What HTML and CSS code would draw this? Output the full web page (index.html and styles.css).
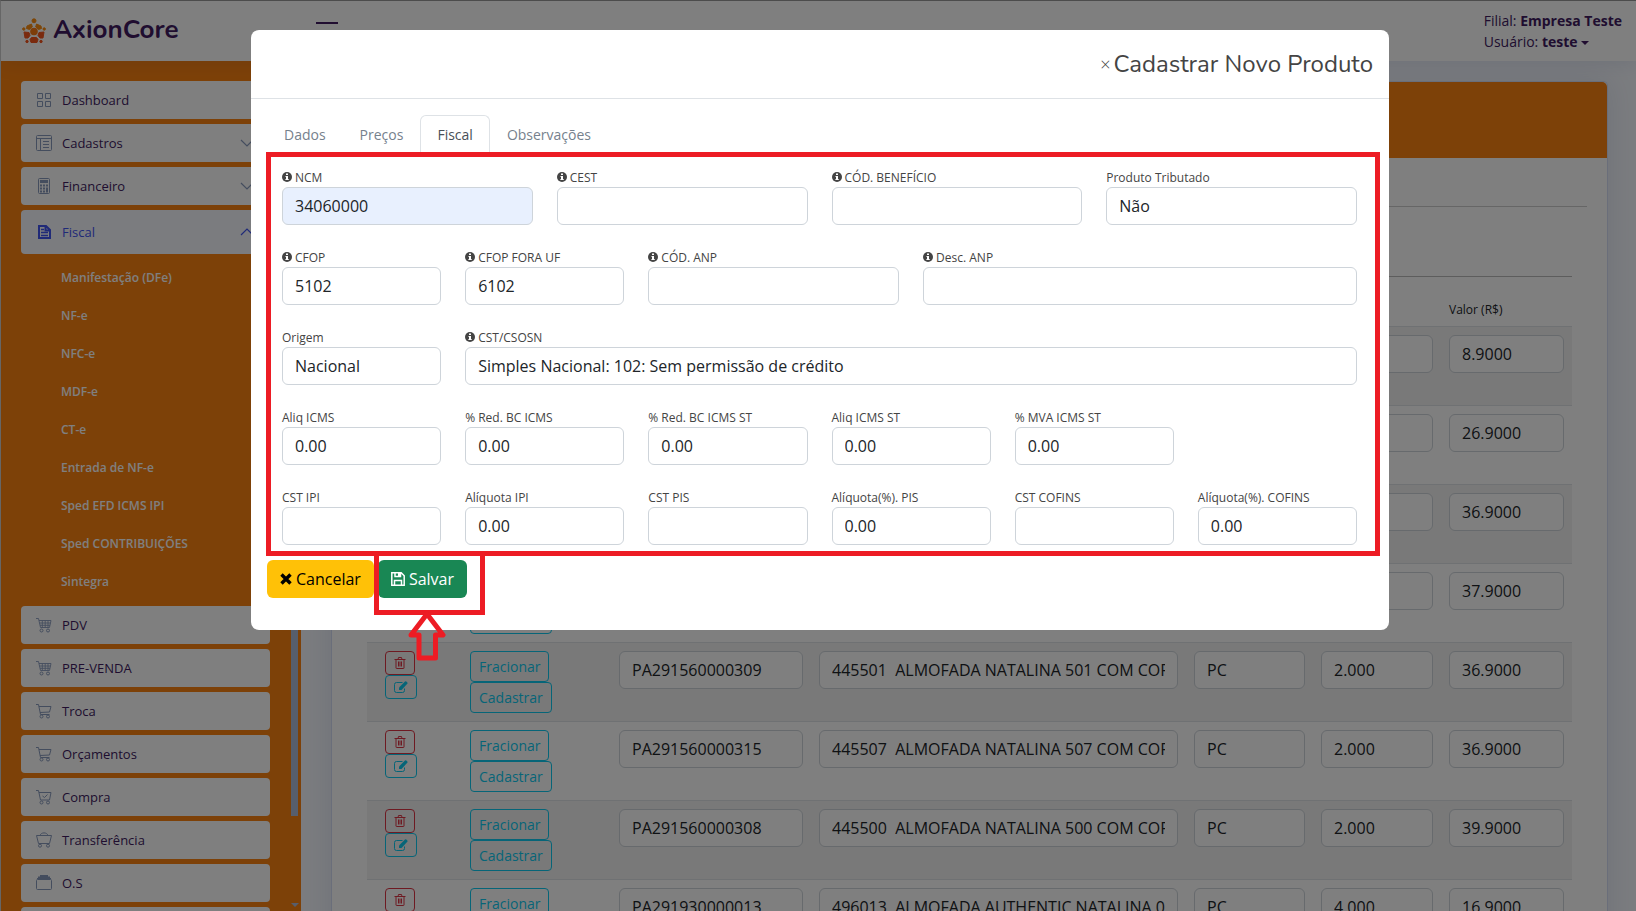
FILE: index.html
```html
<!DOCTYPE html>
<html lang="pt-br">
<head>
    <meta charset="UTF-8">
    <meta name="viewport" content="width=device-width, initial-scale=1.0">
    <title>AxionCore</title>
    <link rel="stylesheet" href="styles.css">
</head>
<body>

<svg class="sprite" aria-hidden="true">
    <symbol id="i-grid" viewBox="0 0 16 16"><path fill="none" stroke="currentColor" d="M1.5 1.5h5v5h-5zM9.500 1.500h5v5h-5zM1.500 9.500h5v5h-5zM9.500 9.500h5v5h-5z"/></symbol>
    <symbol id="i-list" viewBox="0 0 16 16"><path fill="none" stroke="currentColor" d="M.5 1.500a1 1 0 0 1 1-1h13a1 1 0 0 1 1 1v13a1 1 0 0 1-1 1h-13a1 1 0 0 1-1-1zM.5 3.500h15M4.500 3.500v12M7 6.500h6M7 9.500h6M7 12.500h6"/></symbol>
    <symbol id="i-calc" viewBox="0 0 16 16"><path fill="none" stroke="currentColor" d="M2.500 1.500a1 1 0 0 1 1-1h9a1 1 0 0 1 1 1v13a1 1 0 0 1-1 1h-9a1 1 0 0 1-1-1z"/><path fill="currentColor" d="M4 2h8v3H4zM4 6.500h2v2H4zM7 6.500h2v2H7zM10 6.500h2v2h-2zM4 9.500h2v2H4zM7 9.500h2v2H7zM10 9.500h2v5h-2zM4 12.500h2v2H4zM7 12.500h2v2H7z"/></symbol>
    <symbol id="i-doc" viewBox="0 0 16 16"><path fill="none" stroke="currentColor" stroke-width="2" d="M3 2h7l4 4v8H3zM9.500 2v4.500H14"/><path stroke="currentColor" stroke-width="1.500" d="M5 5.500h3M5 8.500h7M5 11.500h7"/></symbol>
    <symbol id="i-cart4" viewBox="0 0 16 16"><path fill="none" stroke="currentColor" stroke-width=".9" d="M0 1.500h2.500l2 9h9l1.500-7H3M3.500 6h11M4 8.300h10M6.300 3.500v7M9.200 3.500v7M12 3.500v7"/><circle cx="5.500" cy="13.500" r="1.500" fill="none" stroke="currentColor"/><circle cx="12" cy="13.500" r="1.500" fill="none" stroke="currentColor"/></symbol>
    <symbol id="i-cart2" viewBox="0 0 16 16"><path fill="none" stroke="currentColor" d="M0 1.500h2.500l2 10h9M3 3.500h12l-1.500 5.500-9.500.5"/><circle cx="5.500" cy="13.500" r="1.500" fill="none" stroke="currentColor"/><circle cx="12" cy="13.500" r="1.500" fill="none" stroke="currentColor"/></symbol>
    <symbol id="i-cartcheck" viewBox="0 0 16 16"><path fill="none" stroke="currentColor" d="M0 1.500h2.500l2 9.500h9L15 3.500H3M6.500 7l2 1.500 3-3"/><circle cx="5.500" cy="13.500" r="1.500" fill="none" stroke="currentColor"/><circle cx="12" cy="13.500" r="1.500" fill="none" stroke="currentColor"/></symbol>
    <symbol id="i-basket" viewBox="0 0 16 16"><path fill="none" stroke="currentColor" d="M.5 3.500h15L13.500 11.500h-11zM4 3.500C5 0 11 0 12 3.500"/><circle cx="4" cy="13.700" r="1.500" fill="none" stroke="currentColor"/><circle cx="12" cy="13.700" r="1.500" fill="none" stroke="currentColor"/></symbol>
    <symbol id="i-collection" viewBox="0 0 16 16"><path fill="none" stroke="currentColor" d="M.5 5.500a1 1 0 0 1 1-1h13a1 1 0 0 1 1 1v8a1 1 0 0 1-1 1h-13a1 1 0 0 1-1-1z"/><path fill="currentColor" d="M4 0h8v1.500h2V3h1v1H1V3h1V1.500h2z"/></symbol>
    <symbol id="i-down" viewBox="0 0 16 16"><path fill="none" stroke="currentColor" stroke-width="1.200" d="M2 5l6 6 6-6"/></symbol>
    <symbol id="i-up" viewBox="0 0 16 16"><path fill="none" stroke="currentColor" stroke-width="1.200" d="M2 11l6-6 6 6"/></symbol>
    <symbol id="i-info" viewBox="0 0 10 10"><circle cx="5" cy="5" r="5" fill="currentColor"/><path fill="#fff" d="M4 1.500h2v1.500H4zM3.500 4H6v3h.7v1H3.400V7H4V5h-.5z"/></symbol>
    <symbol id="i-trash" viewBox="0 0 12 12"><path fill="none" stroke="currentColor" d="M.5 2.500h11M4 2.500l.5-2h3l.5 2M2 2.500v8.500a.5.5 0 0 0 .5.500h7a.5.5 0 0 0 .5-.5V2.500M4.500 4.500v5M6 4.500v5M7.500 4.500v5"/></symbol>
    <symbol id="i-edit" viewBox="0 0 14 12"><path fill="none" stroke="currentColor" d="M8.500 1.500h-6a2 2 0 0 0-2 2v6a2 2 0 0 0 2 2h6a2 2 0 0 0 2-2V7.500"/><path fill="currentColor" d="M5 9V6.500L11 .5a1 1 0 0 1 1.300 0l1 1a1 1 0 0 1 0 1.300L7.500 9z"/></symbol>
    <symbol id="i-x" viewBox="0 0 12 12"><path fill="none" stroke="currentColor" stroke-width="3.400" d="M1.500 1.500l9 9M10.500 1.500l-9 9"/></symbol>
    <symbol id="i-save" viewBox="0 0 14 14"><path fill="none" stroke="currentColor" stroke-width="1.500" d="M.8.8h9.400l3 3v9.400H.8zM3.500 13V8.500h7V13M4 1v3.500h5.500V1"/><path fill="currentColor" d="M7 1h2v3H7z"/></symbol>
</svg>

<header class="header">
    <a class="logo" href="#">
        <svg width="24" height="26" viewBox="0 0 24 26">
            <g fill="#fb8c10" stroke="#fb8c10" stroke-linejoin="round">
                <circle cx="12" cy="2.800" r="2"/><circle cx="1.800" cy="11" r="1.200"/><circle cx="22.200" cy="11" r="1.200"/>
                <path d="M9.500 6l.8 3-2.800 2.500-3-1L5 8zM14.500 6l-.8 3 2.800 2.500 3-1L19 8z"/>
            </g>
            <g fill="#f4551c" stroke="#f4551c" stroke-linejoin="round">
                <circle cx="5" cy="23.500" r="1.200"/><circle cx="19" cy="23.500" r="1.200"/>
                <path d="M2 14l5 .5 1 3-2 2.500H3zM22 14l-5 .5-1 3 2 2.500h3zM9.500 19.500h5l1.500 2-1 3H9l-1-3z"/>
            </g>
            <circle cx="12" cy="13.500" r="3.800" fill="#fb7a14"/>
        </svg>
        <span>AxionCore</span>
    </a>
    <button class="toggle" aria-label="Menu"></button>
    <div class="user">
        <div>Filial: <b>Empresa Teste</b></div>
        <div>Usuário: <b>teste</b> <i class="caret"></i></div>
    </div>
</header>

<div class="page">
    <aside class="sidebar">
        <nav class="menu">
            <a href="#" class="item"><svg><use href="#i-grid"/></svg>Dashboard</a>
            <a href="#" class="item"><svg><use href="#i-list"/></svg>Cadastros<svg class="arrow"><use href="#i-down"/></svg></a>
            <a href="#" class="item"><svg><use href="#i-calc"/></svg>Financeiro<svg class="arrow"><use href="#i-down"/></svg></a>
            <a href="#" class="item active"><svg><use href="#i-doc"/></svg>Fiscal<svg class="arrow"><use href="#i-up"/></svg></a>
            <div class="submenu">
                <a href="#">Manifestação (DFe)</a>
                <a href="#">NF-e</a>
                <a href="#">NFC-e</a>
                <a href="#">MDF-e</a>
                <a href="#">CT-e</a>
                <a href="#">Entrada de NF-e</a>
                <a href="#">Sped EFD ICMS IPI</a>
                <a href="#">Sped CONTRIBUIÇÕES</a>
                <a href="#">Sintegra</a>
            </div>
            <a href="#" class="item"><svg><use href="#i-cart4"/></svg>PDV</a>
            <a href="#" class="item"><svg><use href="#i-cart4"/></svg>PRE-VENDA</a>
            <a href="#" class="item"><svg><use href="#i-cart2"/></svg>Troca</a>
            <a href="#" class="item"><svg><use href="#i-cart2"/></svg>Orçamentos</a>
            <a href="#" class="item"><svg><use href="#i-cartcheck"/></svg>Compra</a>
            <a href="#" class="item"><svg><use href="#i-basket"/></svg>Transferência</a>
            <a href="#" class="item"><svg><use href="#i-collection"/></svg>O.S</a>
            <a href="#" class="item"></a>
        </nav>
        <div class="scrollbar"><div class="thumb"></div><i class="caret"></i></div>
    </aside>

    <main class="main">
        <section class="card">
            <div class="card-top"></div>
            <div class="card-line"></div>
            <div class="table-box">
                <table>
                    <colgroup>
                        <col class="c-acao"><col class="c-opcao"><col class="c-cod"><col>
                        <col class="c-un"><col class="c-qtd"><col class="c-valor">
                    </colgroup>
                    <thead>
                        <tr><th></th><th></th><th></th><th></th><th></th><th></th><th>Valor (R$)</th></tr>
                    </thead>
                    <tbody id="itens"></tbody>
                </table>
            </div>
        </section>
    </main>
</div>

<div class="backdrop">
    <div class="modal" role="dialog" aria-labelledby="titulo">
        <div class="modal-header">
            <button class="close" aria-label="Fechar">×</button>
            <h5 id="titulo">Cadastrar Novo Produto</h5>
        </div>
        <form class="modal-body">
            <div class="tabs">
                <button type="button">Dados</button>
                <button type="button">Preços</button>
                <button type="button" class="active">Fiscal</button>
                <button type="button">Observações</button>
            </div>
            <div class="pane">
                <div class="field s3"><label for="ncm"><svg><use href="#i-info"/></svg>NCM</label><input id="ncm" class="filled" value="34060000"></div>
                <div class="field s3"><label for="cest"><svg><use href="#i-info"/></svg>CEST</label><input id="cest"></div>
                <div class="field s3"><label for="benef"><svg><use href="#i-info"/></svg>CÓD. BENEFÍCIO</label><input id="benef"></div>
                <div class="field s3"><label for="trib">Produto Tributado</label><select id="trib"><option>Não</option></select></div>

                <div class="field s2"><label for="cfop"><svg><use href="#i-info"/></svg>CFOP</label><input id="cfop" value="5102"></div>
                <div class="field s2"><label for="cfopf"><svg><use href="#i-info"/></svg>CFOP FORA UF</label><input id="cfopf" value="6102"></div>
                <div class="field s3"><label for="anp"><svg><use href="#i-info"/></svg>CÓD. ANP</label><input id="anp"></div>
                <div class="field s5"><label for="danp"><svg><use href="#i-info"/></svg>Desc. ANP</label><input id="danp"></div>

                <div class="field s2"><label for="origem">Origem</label><select id="origem"><option>Nacional</option></select></div>
                <div class="field s10"><label for="cst"><svg><use href="#i-info"/></svg>CST/CSOSN</label><select id="cst"><option>Simples Nacional: 102: Sem permissão de crédito</option></select></div>

                <div class="field s2"><label for="icms">Aliq ICMS</label><input id="icms" value="0.00"></div>
                <div class="field s2"><label for="red">% Red. BC ICMS</label><input id="red" value="0.00"></div>
                <div class="field s2"><label for="redst">% Red. BC ICMS ST</label><input id="redst" value="0.00"></div>
                <div class="field s2"><label for="icmsst">Aliq ICMS ST</label><input id="icmsst" value="0.00"></div>
                <div class="field s2"><label for="mva">% MVA ICMS ST</label><input id="mva" value="0.00"></div>

                <div class="field s2 first"><label for="cstipi">CST IPI</label><input id="cstipi"></div>
                <div class="field s2"><label for="ipi">Alíquota IPI</label><input id="ipi" value="0.00"></div>
                <div class="field s2"><label for="cstpis">CST PIS</label><input id="cstpis"></div>
                <div class="field s2"><label for="pis">Alíquota(%). PIS</label><input id="pis" value="0.00"></div>
                <div class="field s2"><label for="cstcof">CST COFINS</label><input id="cstcof"></div>
                <div class="field s2"><label for="cof">Alíquota(%). COFINS</label><input id="cof" value="0.00"></div>
            </div>
            <div class="actions">
                <button type="button" class="btn cancel"><svg width="12" height="12"><use href="#i-x"/></svg>Cancelar</button>
                <div class="marked">
                    <button type="button" class="btn save"><svg width="14" height="14"><use href="#i-save"/></svg>Salvar</button>
                    <div class="mark"></div>
                    <svg class="mark-arrow" width="40" height="50" viewBox="0 0 40 50"><path fill="none" stroke="#ed1c24" stroke-width="5" stroke-linejoin="round" d="M20 2L36 23H28.500V46H12V23H4z"/></svg>
                </div>
            </div>
        </form>
    </div>
</div>

<script>
    var itens = [
        ["", "", "", "", "8.9000"],
        ["", "", "", "", "26.9000"],
        ["", "", "", "", "36.9000"],
        ["", "", "", "", "37.9000"],
        ["PA291560000309", "445501  ALMOFADA NATALINA 501 COM CORDAO", "PC", "2.000", "36.9000"],
        ["PA291560000315", "445507  ALMOFADA NATALINA 507 COM CORDAO", "PC", "2.000", "36.9000"],
        ["PA291560000308", "445500  ALMOFADA NATALINA 500 COM CORDAO", "PC", "2.000", "39.9000"],
        ["PA291930000013", "496013  ALMOFADA AUTHENTIC NATALINA 013", "PC", "4.000", "16.9000"]
    ];
    var nomes = ["Código", "Descrição", "Unidade", "Quantidade", "Valor"];
    var html = "";
    for (let i = 0; i < itens.length; i++) {
        html += `<tr><td><div class="stack">
            <button class="mini del" aria-label="Excluir"><svg width="12" height="12"><use href="#i-trash"/></svg></button>
            <button class="mini edit" aria-label="Editar"><svg width="14" height="12"><use href="#i-edit"/></svg></button>
            </div></td><td><div class="stack">
            <button class="small">Fracionar</button><button class="small">Cadastrar</button></div></td>`;
        for (let j = 0; j < 5; j++) {
            html += `<td><input aria-label="${nomes[j]}" value="${itens[i][j]}"></td>`;
        }
        html += "</tr>";
    }
    document.getElementById("itens").innerHTML = html;
</script>
</body>
</html>
```
FILE: styles.css
```css
* {
    box-sizing: border-box;
}

body {
    margin: 0;
    height: 100vh;
    overflow: hidden;
    display: flex;
    flex-direction: column;
    border-top: 1px solid #999;
    border-left: 1px solid #ccc;
    background: #f6f9ff;
    color: #444;
    font-family: "Open Sans", sans-serif;
    font-size: 16px;
}

a {
    text-decoration: none;
}

button, input, select {
    font-family: inherit;
}

.sprite {
    display: none;
}

/* header */
.header {
    display: flex;
    flex: none;
    align-items: center;
    height: 60px;
    padding: 0 14px 0 21px;
    background: #fff;
    box-shadow: 0 2px 20px rgba(1, 41, 112, 0.1);
    color: #401a60;
    z-index: 1;
}

.logo {
    display: flex;
    align-items: center;
    gap: 7px;
    width: 294px;
    color: #401a60;
    font-family: Nunito, Lato, sans-serif;
    font-size: 26px;
    font-weight: 700;
    line-height: 30px;
}

.logo span {
    padding-bottom: 2px;
}

.toggle {
    width: 22px;
    height: 2px;
    margin-bottom: 16px;
    padding: 0;
    border: 0;
    background: #401a60;
}

.user {
    margin-left: auto;
    font-size: 14px;
    line-height: 21px;
}

.caret {
    display: inline-block;
    border: 4px solid transparent;
    border-top-color: currentColor;
    border-bottom: 0;
    vertical-align: middle;
}

/* sidebar */
.page {
    display: flex;
    flex: 1;
    min-height: 0;
    overflow: hidden;
}

.sidebar {
    display: flex;
    flex: none;
    width: 300px;
    padding-left: 20px;
    background: #fa8210;
    overflow: hidden;
}

.menu {
    display: flex;
    flex-direction: column;
    flex: 1;
    gap: 5px;
    padding-top: 20px;
}

.item {
    display: flex;
    flex: none;
    align-items: center;
    height: 38px;
    padding: 0 15px 1px;
    border-radius: 4px;
    background: #fff;
    color: #401a60;
    font-size: 13px;
    font-weight: 500;
}

.item svg {
    width: 16px;
    height: 16px;
    margin-right: 10px;
    color: #899bbd;
}

.item .arrow {
    margin: 0 0 0 auto;
}

.item.active {
    height: 44px;
    background: #f6f9ff;
    color: #4154f1;
}

.item.active svg {
    color: #4154f1;
}

.submenu a {
    display: block;
    height: 38px;
    padding-left: 40px;
    color: #fff;
    font-size: 12px;
    font-weight: 600;
    line-height: 38px;
}

.scrollbar {
    display: flex;
    flex-direction: column;
    justify-content: space-between;
    align-items: center;
    width: 11px;
    margin-left: 20px;
    padding: 20px 2px 4px 0;
    color: #aebdd8;
}

.thumb {
    width: 7px;
    height: 89%;
    background: #aebdd8;
}

/* content */
.main {
    flex: 1;
    min-width: 0;
    padding: 20px 28px 0 30px;
}

.card {
    border: 1px solid #d5dcf5;
    border-bottom: 0;
    border-radius: 5px;
    background: #fff;
    box-shadow: 0 0 30px rgba(1, 41, 112, 0.1);
}

.card-top {
    height: 76px;
    border-radius: 5px 5px 0 0;
    background: #fa8210;
}

.card-line {
    height: 49px;
    margin: 0 20px;
    border-bottom: 1px solid #ccc;
}

.table-box {
    margin: 69px 35px 0;
    border-top: 1px solid #bbb;
}

table {
    width: 100%;
    table-layout: fixed;
    border-collapse: collapse;
}

.c-acao { width: 95px; }
.c-opcao { width: 149px; }
.c-cod { width: 200px; }
.c-un { width: 127px; }
.c-qtd { width: 128px; }
.c-valor { width: 131px; }

th {
    height: 49px;
    padding: 16px 8px 0;
    color: #212529;
    font-size: 12px;
    font-weight: 500;
    text-align: left;
}

td {
    height: 79px;
    padding: 8px;
    border-top: 1px solid #dee2e6;
    vertical-align: top;
}

td:first-child {
    padding-left: 18px;
}

tbody tr:nth-child(odd) {
    background: #f2f2f2;
}

input, select {
    display: block;
    width: 100%;
    height: 38px;
    padding: 0 12px;
    border: 1px solid #ced4da;
    border-radius: 6px;
    background: #fff;
    color: #212529;
    font-size: 16px;
    appearance: none;
}

.stack {
    display: flex;
    flex-direction: column;
    align-items: flex-start;
}

.mini, .small {
    border: 1px solid #0dcaf0;
    border-radius: 4px;
    background: transparent;
    color: #0dcaf0;
}

.mini {
    display: flex;
    align-items: center;
    height: 24px;
    padding: 0 8px;
}

.mini.del {
    border-color: #dc3545;
    color: #dc3545;
}

.small {
    height: 31px;
    padding: 0 8px;
    font-size: 14px;
}

/* modal */
.backdrop {
    position: fixed;
    inset: 0;
    z-index: 10;
    padding: 30px 247px 30px 251px;
    background: rgba(0, 0, 0, 0.5);
}

.modal {
    border-radius: 8px;
    background: #fff;
}

.modal-header {
    display: flex;
    justify-content: flex-end;
    align-items: center;
    gap: 3px;
    height: 69px;
    padding-right: 16px;
    border-bottom: 1px solid #dee2e6;
}

.modal-header h5 {
    margin: 0;
    font-family: Nunito, Lato, sans-serif;
    font-size: 24px;
    font-weight: 400;
}

.close {
    padding: 0;
    border: 0;
    background: none;
    color: #444;
    font-size: 18px;
    font-weight: 300;
}

.modal-body {
    padding: 16px 9px 32px 15px;
}

.tabs {
    display: flex;
    padding-left: 1px;
}

.tabs button {
    height: 37px;
    padding: 0 16px;
    border: 1px solid transparent;
    border-bottom: 0;
    border-radius: 6px 6px 0 0;
    background: #fff;
    color: #76818d;
    font-size: 14px;
}

.tabs .active {
    border-color: #dee2e6;
    color: #495057;
}

.pane {
    display: grid;
    grid-template-columns: repeat(12, 1fr);
    gap: 22px 24px;
    padding: 10px 18px 6px 11px;
    border: 5px solid #ed1c24;
}

.s2 { grid-column: span 2; }
.s3 { grid-column: span 3; }
.s5 { grid-column: span 5; }
.s10 { grid-column: span 10; }
.first { grid-column: 1 / span 2; }

.field label {
    display: flex;
    align-items: center;
    gap: 3px;
    height: 20px;
    font-size: 12px;
}

.field svg {
    width: 10px;
    height: 10px;
}

.field .filled {
    background: #e8f0fe;
}

.actions {
    display: flex;
    gap: 4px;
    padding: 4px 0 0 1px;
}

.btn {
    display: flex;
    align-items: center;
    gap: 4px;
    height: 38px;
    padding: 0 13px;
    border: 0;
    border-radius: 6px;
    font-size: 16px;
}

.cancel {
    background: #ffc107;
    color: #000;
}

.save {
    background: #198754;
    color: #fff;
    font-weight: 500;
}

.marked {
    position: relative;
}

.mark {
    position: absolute;
    top: -9px;
    left: -4px;
    width: 111px;
    height: 64px;
    border: 5px solid #ed1c24;
}

.mark-arrow {
    position: absolute;
    top: 52px;
    left: 29px;
}
```
